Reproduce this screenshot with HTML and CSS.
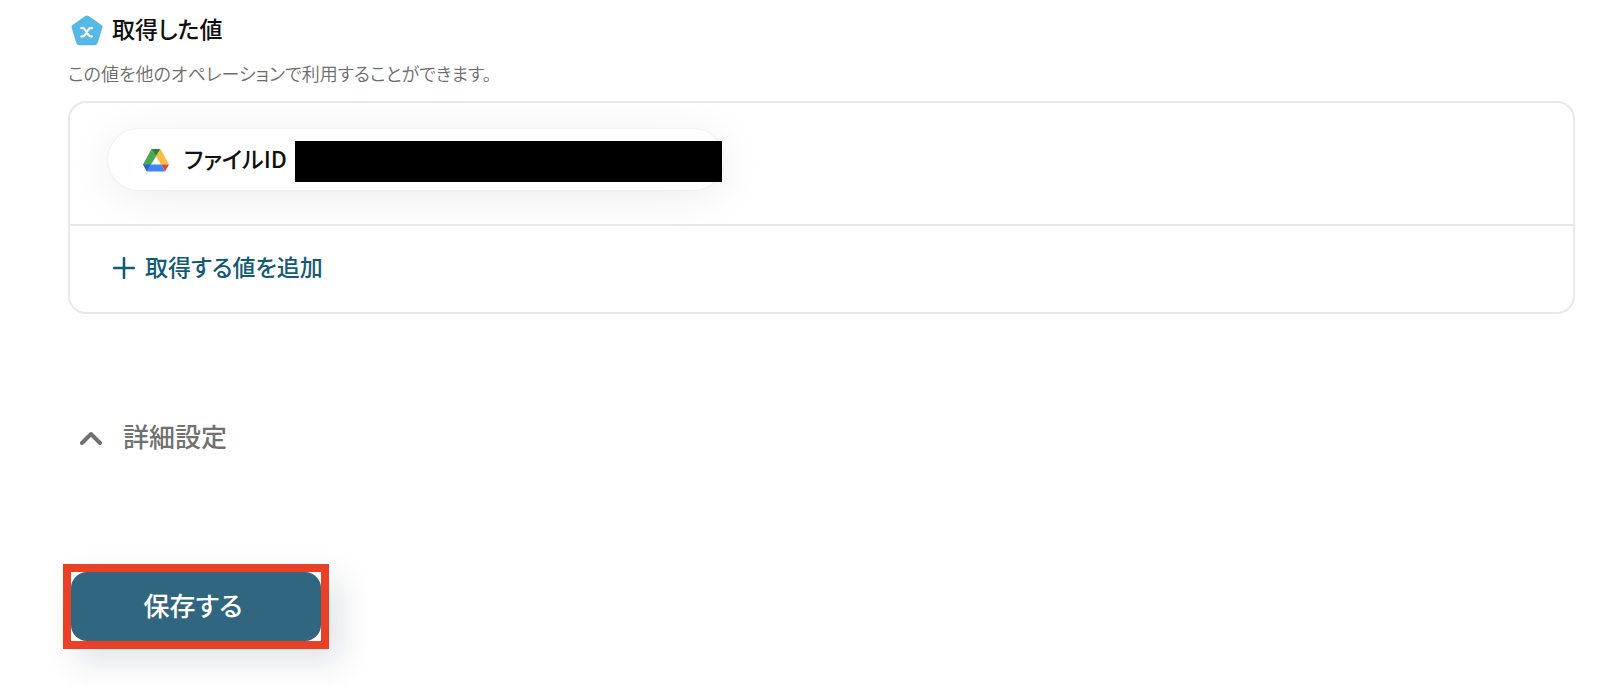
FILE: index.html
```html
<!DOCTYPE html>
<html lang="ja">
<head>
  <meta charset="UTF-8" />
  <meta name="viewport" content="width=device-width, initial-scale=1.0"/>
  <title>取得した値</title>
  <link rel="stylesheet" href="styles.css">
</head>
<body>

  <main class="container">
    <section class="output">
      <h2>
        <svg class="icon-value" viewBox="0 0 32 32" aria-hidden="true">
          <path d="M14.3 1.1a3 3 0 0 1 3.4 0L30.2 9.700a3 3 0 0 1 1.100 3.400L26.600 28.200a3 3 0 0 1-2.900 2.100H8.300a3 3 0 0 1-2.900-2.100L.7 13.100a3 3 0 0 1 1.100-3.400z" fill="#56b8e6"/>
          <path d="M10.300 13c2.400-.3 3.200.6 4.300 2.500l2.200 3.600c1.100 1.900 2 2.700 4.200 2.400M21 13c-2.400-.3-3.200.6-4.300 2.500l-2.200 3.600c-1.100 1.900-2 2.700-4.200 2.400" fill="none" stroke="#fff" stroke-width="2.200" stroke-linecap="round"/>
        </svg>
        取得した値
      </h2>
      <p class="output-note">この値を他のオペレーションで利用することができます。</p>

      <div class="card">
        <div class="card-row">
          <div class="value-pill">
            <svg class="icon-drive" viewBox="0 0 26 24" aria-hidden="true">
              <path d="M8.500 1 13 8.500 8 16.500 4 23.500 0 16.500z" fill="#4aa853"/>
              <path d="M8.500 1h9L13 8.500z" fill="#2c8038"/>
              <path d="M17.500 1 26 16.500h-8L13 8.500z" fill="#f8bd42"/>
              <path d="M18 16.500h8L22 23.500z" fill="#dc4a38"/>
              <path d="M0 16.500h8L4 23.500z" fill="#2b62d0"/>
              <path d="M8 16.500h10l4 7H4z" fill="#4285f4"/>
            </svg>
            <span class="value-name">ファイルID</span>
            <span class="value-mask"></span>
          </div>
        </div>
        <div class="card-row card-add">
          <button type="button" class="add-button">
            <svg class="icon-plus" viewBox="0 0 20 20" aria-hidden="true">
              <path d="M10 1v18M1 10h18" stroke="currentColor" stroke-width="2.300" stroke-linecap="round"/>
            </svg>
            <span>取得する値を追加</span>
          </button>
        </div>
      </div>
    </section>

    <button type="button" class="detail-toggle">
      <svg class="icon-chevron" viewBox="0 0 22 14" aria-hidden="true">
        <path d="M2 12 11 3l9 9" fill="none" stroke="currentColor" stroke-width="4" stroke-linecap="round" stroke-linejoin="round"/>
      </svg>
      <span>詳細設定</span>
    </button>

    <div class="save-frame">
      <button type="button" class="save-button">保存する</button>
    </div>
  </main>

</body>
</html>
```
FILE: styles.css
```css
body {
  font-family: "Noto Sans CJK JP", sans-serif;
  font-feature-settings: "palt";
  background: #fff;
  color: #111;
  margin: 0;
}
.container {
  padding: 11px 25px 36px 68px;
}
h2 {
  display: flex;
  align-items: flex-start;
  gap: 9px;
  margin: 0;
  padding-left: 3px;
  font-size: 23px;
  line-height: 34px;
  font-weight: 500;
}
.icon-value {
  width: 32px;
  height: 32px;
  margin-top: 4px;
}
.output-note {
  margin: 13px 0 15px;
  font-size: 18px;
  line-height: 26px;
  font-weight: 350;
  color: #6c6c6c;
}
.card {
  border: 2px solid #e8e8e8;
  border-radius: 18px;
}
.card-row {
  padding: 26px 38px 34px;
}
.card-add {
  border-top: 2px solid #e8e8e8;
  padding: 23px 43px 26px;
}
.value-pill {
  display: flex;
  align-items: center;
  box-sizing: border-box;
  width: 616px;
  max-width: 100%;
  height: 61px;
  padding-left: 35px;
  border-radius: 31px;
  background: #fff;
  box-shadow: 0 0 2px rgba(0,0,0,0.1), 0 6px 44px rgba(0,0,0,0.08);
}
.icon-drive {
  width: 26px;
  height: 24px;
  margin-right: 15px;
}
.value-name {
  padding-bottom: 3px;
  font-size: 23px;
  line-height: 34px;
  font-weight: 500;
}
.value-mask {
  flex: none;
  width: 427px;
  height: 41px;
  margin-top: 4px;
  margin-left: 8px;
  background: #000;
}
button {
  border: none;
  background: none;
  font-family: inherit;
  font-feature-settings: inherit;
  font-weight: 500;
  cursor: pointer;
}
.add-button {
  display: flex;
  align-items: center;
  gap: 10px;
  padding: 0;
  font-size: 23px;
  line-height: 34px;
  color: #135a76;
}
.add-button span,
.detail-toggle span {
  padding-bottom: 3px;
}
.icon-plus {
  width: 22px;
  height: 22px;
}
.detail-toggle {
  display: flex;
  align-items: center;
  gap: 21px;
  margin-top: 103px;
  padding: 0 12px;
  font-size: 26px;
  line-height: 38px;
  color: #717171;
}
.icon-chevron {
  width: 22px;
  height: 14px;
}
.save-frame {
  width: 250px;
  margin: 106px 0 0 -5px;
  border: 8px solid #ea4025;
  box-shadow: 12px 14px 32px rgba(20,30,50,0.12);
}
.save-button {
  display: block;
  width: 100%;
  padding: 14px 6px 17px 0;
  border-radius: 16px;
  background: #30667f;
  color: #fff;
  font-size: 26px;
  line-height: 38px;
}
```
